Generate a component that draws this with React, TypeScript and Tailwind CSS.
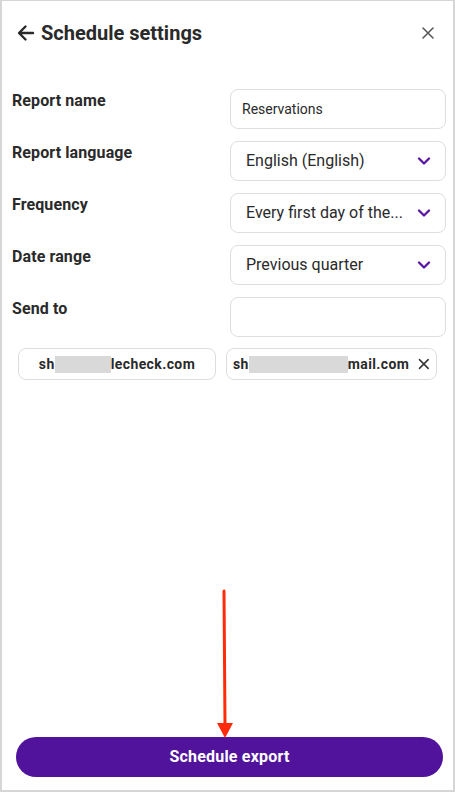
import React from "react";

const font = { fontFamily: "Roboto, 'Noto Sans', sans-serif" };

const Chevron = () => (
  <svg width="14" height="10" viewBox="0 0 14 10" fill="none">
    <path d="M2 2.5 L7 7.5 L12 2.5" stroke="#5b1aa6" strokeWidth="2.4" strokeLinecap="round" strokeLinejoin="round" />
  </svg>
);

type Row = { label: string; value: string; kind: "text" | "select" | "empty" };

const rows: Row[] = [
  { label: "Report name", value: "Reservations", kind: "text" },
  { label: "Report language", value: "English (English)", kind: "select" },
  { label: "Frequency", value: "Every first day of the...", kind: "select" },
  { label: "Date range", value: "Previous quarter", kind: "select" },
  { label: "Send to", value: "", kind: "empty" },
];

const App: React.FC = () => {
  return (
    <div
      className="relative w-[455px] h-[792px] bg-white border-2 border-[#d6d6d6] border-t-[1px] flex flex-col text-[#2a2a2a]"
      style={font}
    >
      {/* header */}
      <div className="flex items-center justify-between h-[62px] pl-[14px] pr-[18px] pt-[2px]">
        <div className="flex items-center gap-[5px]">
          <svg width="20" height="20" viewBox="0 0 20 20" fill="none">
            <path d="M17 10 H3.5 M9.5 3.5 L3 10 L9.5 16.5" stroke="#2a2a2a" strokeWidth="2.4" strokeLinecap="round" strokeLinejoin="round" />
          </svg>
          <h1 className="text-[20px] font-bold tracking-[0px]">Schedule settings</h1>
        </div>
        <svg width="14" height="14" viewBox="0 0 14 14" fill="none">
          <path d="M2 2 L12 12 M12 2 L2 12" stroke="#555" strokeWidth="1.5" strokeLinecap="round" />
        </svg>
      </div>

      {/* form */}
      <div className="flex flex-col gap-[12px] pl-[10px] pr-[7px] pt-[26px]">
        {rows.map((r) => (
          <div key={r.label} className="flex justify-between">
            <div className="text-[16px] leading-[24px] font-bold tracking-[0.1px]">{r.label}</div>
            <div className="w-[216px] h-[40px] border border-[#dedede] rounded-[8px] flex items-center justify-between">
              {r.kind === "text" && <span className="pl-[11px] text-[14px]">{r.value}</span>}
              {r.kind === "select" && (
                <>
                  <span className="pl-[15px] text-[16px] text-[#2a2a2a]">{r.value}</span>
                  <span className="pr-[14px] flex items-center">
                    <Chevron />
                  </span>
                </>
              )}
            </div>
          </div>
        ))}

        {/* recipients */}
        <div className="flex gap-[10px] pl-[6px] -mt-[1px]">
          <div className="w-[198px] h-[32px] border border-[#dedede] rounded-[8px] flex items-center justify-center text-[14px] font-bold tracking-[0.4px]">
            <span>sh</span>
            <span className="inline-block w-[56px] h-[17px] bg-[#d9d9d9]" />
            <span>lecheck.com</span>
          </div>
          <div className="w-[211px] h-[32px] border border-[#dedede] rounded-[8px] flex items-center pl-[6px] pr-[6px] text-[14px] font-bold tracking-[0.4px]">
            <span>sh</span>
            <span className="inline-block w-[102px] h-[17px] bg-[#d9d9d9]" />
            <span>mail.com</span>
            <svg className="ml-[9px]" width="12" height="12" viewBox="0 0 12 12" fill="none">
              <path d="M1.5 1.5 L10.5 10.5 M10.5 1.5 L1.5 10.5" stroke="#333" strokeWidth="1.5" strokeLinecap="round" />
            </svg>
          </div>
        </div>
      </div>

      <div className="flex-1" />

      {/* footer */}
      <div className="px-[14px] pb-[13px]">
        <button className="w-[427px] h-[40px] rounded-full bg-[#52139c] text-white text-[16px] font-bold tracking-[0.2px]">
          Schedule export
        </button>
      </div>

      {/* annotation arrow */}
      <svg className="absolute left-[210px] top-[586px]" width="28" height="154" viewBox="0 0 28 154" fill="none">
        <path d="M12 4 L13 138" stroke="#ff2a0a" strokeWidth="3" strokeLinecap="round" />
        <path d="M5 136 L21 136 L13 151 Z" fill="#ff2a0a" />
      </svg>
    </div>
  );
};

export default App;
